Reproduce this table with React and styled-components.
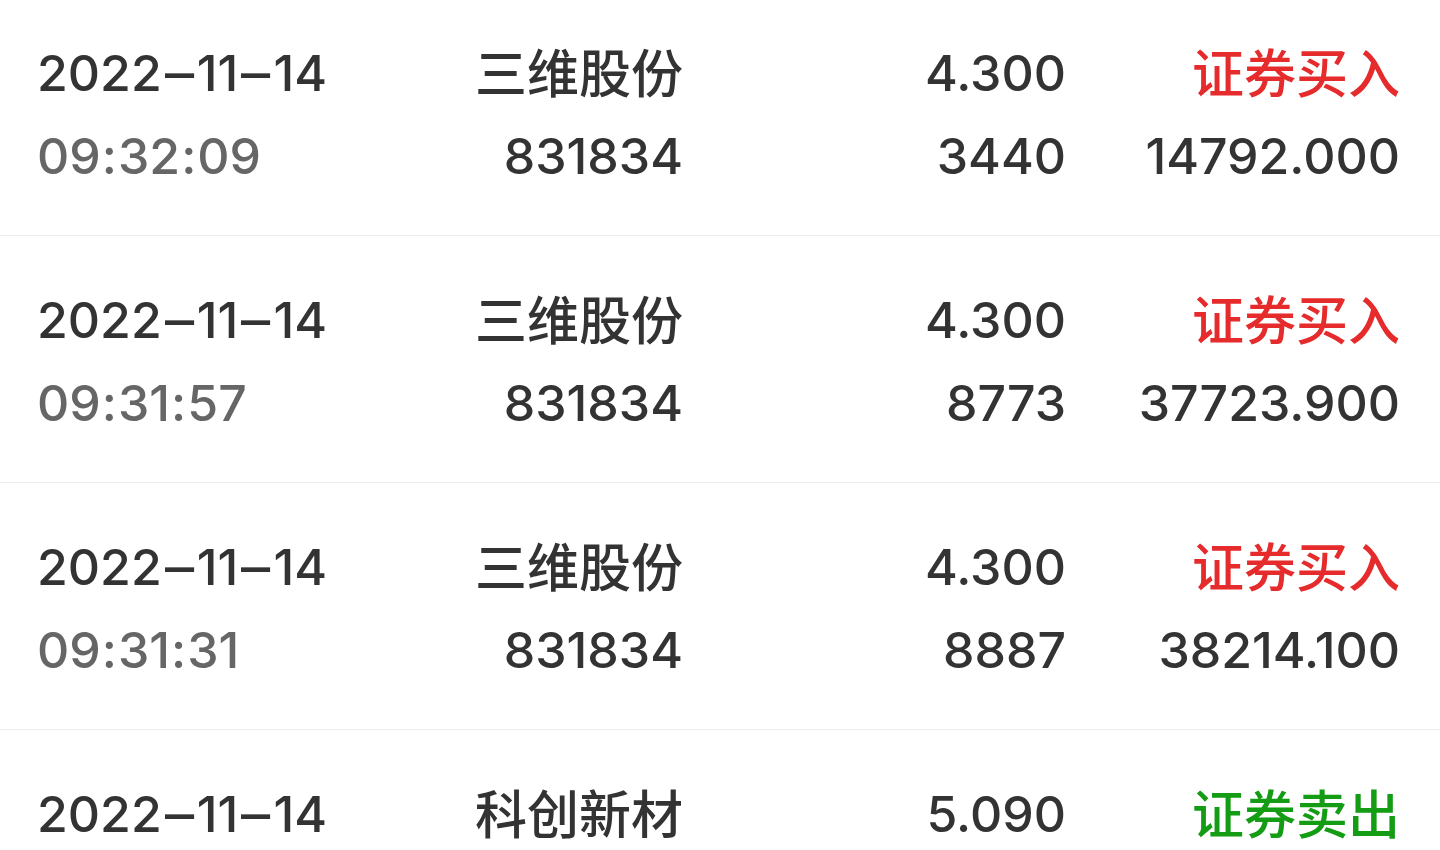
import React from "react";
import styled, { createGlobalStyle } from "styled-components";

const Global = createGlobalStyle`
  html, body { margin: 0; padding: 0; background: #fff; }
  body { overflow: hidden; }
`;

const List = styled.div`
  margin-top: -11px;
  font-family: Inter, "Noto Sans CJK SC", sans-serif;
  font-weight: 500;
  color: #333;
`;

const Row = styled.div`
  display: grid;
  grid-template-columns: 300px 346px 383px 334px;
  padding: 43px 40px 37px 37px;
  box-sizing: border-box;
  border-bottom: 1px solid #ececec;
  height: 247px;
`;

const Cell = styled.div`
  display: flex;
  flex-direction: column;
  align-items: ${(p) => (p.$left ? "flex-start" : "flex-end")};
`;

const Line = styled.div`
  line-height: ${(p) => (p.$cjk ? "77px" : "83px")};
  height: 83px;
  white-space: nowrap;
  font-size: ${(p) => (p.$cjk ? "52px" : "50px")};
  font-weight: 500;
  font-family: ${(p) => (p.$cjk ? '"Noto Sans CJK SC", sans-serif' : 'Inter, "Noto Sans CJK SC", sans-serif')};
  color: ${(p) => p.$color || "#333"};
`;

const Dash = styled.span`
  display: inline-block;
  margin: 0 6px;
  transform: scaleX(1.8);
`;

const Colon = styled.span`
  margin: 0 1px;
`;

function DateText({ value }) {
  const parts = value.split("-");
  return parts.map((p, i) => (
    <React.Fragment key={i}>
      {i > 0 && <Dash>-</Dash>}
      {p}
    </React.Fragment>
  ));
}

function TimeText({ value }) {
  const parts = value.split(":");
  return parts.map((p, i) => (
    <React.Fragment key={i}>
      {i > 0 && <Colon>:</Colon>}
      {p}
    </React.Fragment>
  ));
}

const records = [
  { date: "2022-11-14", time: "09:32:09", name: "三维股份", code: "831834", price: "4.300", qty: "3440", type: "证券买入", amount: "14792.000" },
  { date: "2022-11-14", time: "09:31:57", name: "三维股份", code: "831834", price: "4.300", qty: "8773", type: "证券买入", amount: "37723.900" },
  { date: "2022-11-14", time: "09:31:31", name: "三维股份", code: "831834", price: "4.300", qty: "8887", type: "证券买入", amount: "38214.100" },
  { date: "2022-11-14", time: "09:30:12", name: "科创新材", code: "833580", price: "5.090", qty: "2000", type: "证券卖出", amount: "10180.000" },
];

export default function App() {
  return (
    <>
      <Global />
      <List>
        {records.map((r, i) => (
          <Row key={i}>
            <Cell $left>
              <Line><DateText value={r.date} /></Line>
              <Line $color="#666"><TimeText value={r.time} /></Line>
            </Cell>
            <Cell>
              <Line $cjk>{r.name}</Line>
              <Line>{r.code}</Line>
            </Cell>
            <Cell>
              <Line>{r.price}</Line>
              <Line>{r.qty}</Line>
            </Cell>
            <Cell>
              <Line $cjk $color={r.type === "证券买入" ? "#e52b2b" : "#149c14"}>{r.type}</Line>
              <Line>{r.amount}</Line>
            </Cell>
          </Row>
        ))}
      </List>
    </>
  );
}
